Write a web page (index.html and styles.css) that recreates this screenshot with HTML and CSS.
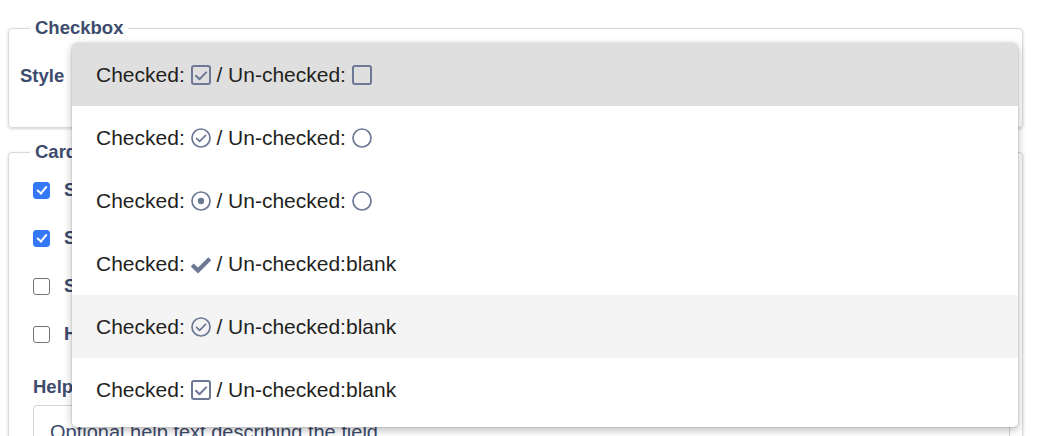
FILE: index.html
```html
<!DOCTYPE html>
<html lang="en">
<head>
<meta charset="utf-8">
<title>Checkbox settings</title>
<link rel="stylesheet" href="styles.css">
</head>
<body>
<div class="page">
  <fieldset class="group group-checkbox">
    <legend class="legend">Checkbox</legend>
    <div class="field-row">
      <span class="label">Style</span>
    </div>
  </fieldset>

  <fieldset class="group group-card">
    <legend class="legend">Card options</legend>
    <div class="card-body">
      <div class="check-row"><span class="cb cb-on"></span><span class="label">Show title</span></div>
      <div class="check-row"><span class="cb cb-on"></span><span class="label">Show border</span></div>
      <div class="check-row"><span class="cb"></span><span class="label">Show description</span></div>
      <div class="check-row"><span class="cb"></span><span class="label">Hide when empty</span></div>
      <div class="help-label label">Help text</div>
      <div class="input">Optional help text describing the field</div>
    </div>
  </fieldset>

  <div class="menu">
    <div class="opt opt-selected">Checked: <svg class="ic" viewBox="0 0 20 20"><rect x="1" y="1" width="18" height="18" rx="2" class="st"/><path d="M5 10.8 L8.4 14.2 L15.2 7.4" class="st"/></svg> / Un-checked: <svg class="ic" viewBox="0 0 20 20"><rect x="1" y="1" width="18" height="18" rx="2" class="st"/></svg></div>
    <div class="opt">Checked: <svg class="ic" viewBox="0 0 20 20"><circle cx="10" cy="10" r="9" class="st thin"/><path d="M5.6 10.4 L8.6 13.4 L14.6 7.4" class="st thin"/></svg> / Un-checked: <svg class="ic" viewBox="0 0 20 20"><circle cx="10" cy="10" r="9" class="st thin"/></svg></div>
    <div class="opt">Checked: <svg class="ic" viewBox="0 0 20 20"><circle cx="10" cy="10" r="9" class="st thin"/><circle cx="10" cy="10" r="3.2" class="fl"/></svg> / Un-checked: <svg class="ic" viewBox="0 0 20 20"><circle cx="10" cy="10" r="9" class="st thin"/></svg></div>
    <div class="opt">Checked: <svg class="ic" viewBox="0 0 20 20"><path d="M1.2 11 L7 16.6 L18.8 4.8" class="st bold"/></svg> / Un-checked:blank</div>
    <div class="opt opt-hover">Checked: <svg class="ic" viewBox="0 0 20 20"><circle cx="10" cy="10" r="9" class="st thin"/><path d="M5.6 10.4 L8.6 13.4 L14.6 7.4" class="st thin"/></svg> / Un-checked:blank</div>
    <div class="opt">Checked: <svg class="ic" viewBox="0 0 20 20"><rect x="1" y="1" width="18" height="18" rx="2" class="st"/><path d="M5 10.8 L8.4 14.2 L15.2 7.4" class="st"/></svg> / Un-checked:blank</div>
  </div>
</div>
</body>
</html>
```

FILE: styles.css
```css
html, body {
  margin: 0;
  padding: 0;
  background: #ffffff;
  overflow: hidden;
}

body {
  font-family: "Liberation Sans", Arial, Helvetica, sans-serif;
  width: 1038px;
  height: 436px;
}

.page {
  position: relative;
  padding: 18px 15px 0 8px;
}

.group {
  margin: 0;
  border: 1px solid #dadada;
  border-radius: 4px;
  box-shadow: 0 1px 3px rgba(0, 0, 0, 0.18);
  min-width: 0;
}

.legend {
  padding: 0 5px;
  margin-left: 10px;
  font-size: 18.5px;
  line-height: 20px;
  font-weight: bold;
  color: #3d4b6c;
}

.label {
  font-size: 18.5px;
  font-weight: bold;
  color: #3d4b6c;
}

.group-checkbox {
  padding: 0 11px 31px 11px;
}

.field-row {
  margin-top: 18px;
  height: 40px;
  display: flex;
  align-items: center;
}

.group-card {
  margin-top: 14px;
  padding: 0 12px 20px 11px;
}

.card-body {
  padding: 4px 0 0 13px;
}

.check-row {
  height: 48px;
  display: flex;
  align-items: center;
  gap: 14px;
}

.cb {
  width: 17px;
  height: 17px;
  box-sizing: border-box;
  border: 1.5px solid #737373;
  border-radius: 3px;
  background: #fff;
  position: relative;
}

.cb-on {
  background: #3478f6;
  border-color: #3478f6;
}

.cb-on::after {
  content: "";
  position: absolute;
  left: 4.5px;
  top: 1.5px;
  width: 4px;
  height: 8px;
  border: solid #fff;
  border-width: 0 2.5px 2.5px 0;
  transform: rotate(40deg);
}

.help-label {
  margin-top: 18px;
  line-height: 22px;
}

.input {
  margin-top: 7px;
  border: 1px solid #cfd3da;
  border-radius: 4px;
  padding: 12px 16px;
  font-size: 20px;
  line-height: 28px;
  color: #3d4b6c;
}

.menu {
  position: absolute;
  left: 72px;
  top: 43px;
  width: 946px;
  padding-bottom: 6px;
  background: #ffffff;
  border-radius: 5px;
  overflow: hidden;
  box-shadow: 0 0 0 1px rgba(0, 0, 0, 0.05), 0 3px 8px rgba(0, 0, 0, 0.28);
}

.opt {
  height: 63px;
  display: flex;
  align-items: center;
  white-space: pre;
  padding-left: 24px;
  font-size: 21px;
  color: #1f1f21;
}

.opt-selected {
  background: #dfdfdf;
}

.opt-hover {
  background: #f4f4f4;
}

.ic {
  width: 20px;
  height: 20px;
  flex: none;
}

.st {
  fill: none;
  stroke: #6c7895;
  stroke-width: 2;
  stroke-linecap: round;
  stroke-linejoin: round;
}

.st.thin {
  stroke-width: 1.7;
}

.st.bold {
  stroke-width: 4.2;
  stroke-linecap: butt;
  stroke-linejoin: miter;
}

.fl {
  fill: #6c7895;
}
```
